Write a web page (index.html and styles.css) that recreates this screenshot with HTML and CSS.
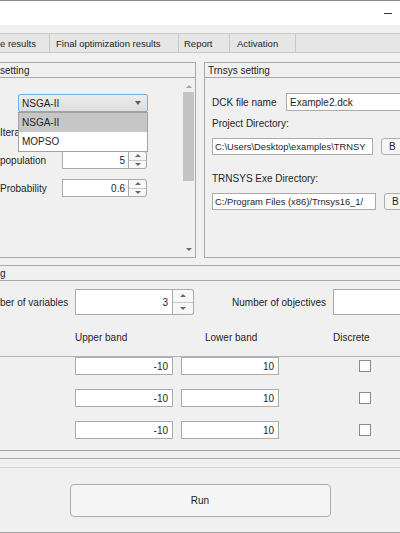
FILE: index.html
```html
<!DOCTYPE html>
<html>
<head>
<meta charset="utf-8">
<link rel="stylesheet" href="styles.css">
</head>
<body>
<div class="titlebar"><span class="min"></span></div>

<div class="tabs">
  <div class="tab tab1"><span>e results</span></div>
  <div class="tab tab2">Final optimization results</div>
  <div class="tab tab3">Report</div>
  <div class="tab tab4">Activation</div>
</div>

<div class="top-row">
  <section class="panel left-panel">
    <div class="panel-head"><span class="cut3">setting</span></div>
    <div class="lp-body">
      <div class="lp-content">
        <div class="dd-wrap">
          <div class="dropdown"><span>NSGA-II</span><span class="dd-arrow"></span></div>
          <ul class="dd-list">
            <li class="dd-item sel">NSGA-II</li>
            <li class="dd-item">MOPSO</li>
          </ul>
        </div>
        <div class="lrow first">
          <span class="llabel">Iteration</span>
          <div class="spinner small"><span class="spin-input">100</span><span class="spin-btns"><span class="up"></span><span class="down"></span></span></div>
        </div>
        <div class="lrow">
          <span class="llabel">population</span>
          <div class="spinner small"><span class="spin-input">5</span><span class="spin-btns"><span class="up"></span><span class="down"></span></span></div>
        </div>
        <div class="lrow">
          <span class="llabel">Probability</span>
          <div class="spinner small"><span class="spin-input">0.6</span><span class="spin-btns"><span class="up"></span><span class="down"></span></span></div>
        </div>
      </div>
      <div class="vscroll">
        <span class="sarrow-up"></span>
        <span class="thumb"></span>
        <span class="sarrow-down"></span>
      </div>
    </div>
  </section>

  <section class="panel right-panel">
    <div class="panel-head">Trnsys setting</div>
    <div class="rp-body">
      <div class="dck-row">
        <span class="dck-label">DCK file name</span>
        <span class="field dck-field">Example2.dck</span>
      </div>
      <div class="rlabel proj">Project Directory:</div>
      <div class="dir-row">
        <span class="field dir-field">C:\Users\Desktop\examples\TRNSY</span>
        <span class="browse">B</span>
      </div>
      <div class="rlabel exe">TRNSYS Exe Directory:</div>
      <div class="dir-row">
        <span class="field dir-field exe-field">C:/Program Files (x86)/Trnsys16_1/</span>
        <span class="browse">B</span>
      </div>
    </div>
  </section>
</div>

<section class="panel lower-panel">
  <div class="panel-head"><span class="cut2">g</span></div>
  <div class="num-row">
    <span class="num-label">ber of variables</span>
    <div class="spinner big"><span class="spin-input">3</span><span class="spin-btns"><span class="up"></span><span class="down"></span></span></div>
    <span class="obj-label">Number of objectives</span>
    <span class="field obj-field"></span>
  </div>
  <div class="head-row">
    <span class="h-up">Upper band</span>
    <span class="h-low">Lower band</span>
    <span class="h-disc">Discrete</span>
  </div>
  <div class="var-area">
    <div class="var-row">
      <span class="field vfield">-10</span>
      <span class="field vfield">10</span>
      <span class="check"></span>
    </div>
    <div class="var-row">
      <span class="field vfield">-10</span>
      <span class="field vfield">10</span>
      <span class="check"></span>
    </div>
    <div class="var-row">
      <span class="field vfield">-10</span>
      <span class="field vfield">10</span>
      <span class="check"></span>
    </div>
  </div>
</section>

<section class="run-panel">
  <button class="run">Run</button>
</section>
</body>
</html>
```

FILE: styles.css
```css
* { box-sizing: border-box; }

body {
  margin: 0;
  width: 400px;
  height: 533px;
  overflow: hidden;
  background: #f0f0f0;
  font-family: "Liberation Sans", Arial, sans-serif;
  font-size: 10px;
  color: #1e1e1e;
}

/* title bar */
.titlebar {
  height: 25px;
  border-top: 1px solid #8c8c8c;
  background: #ffffff;
  display: flex;
  justify-content: flex-end;
  align-items: center;
  padding-right: 8px;
}
.min {
  width: 8px;
  height: 1px;
  background: #333;
}

/* tabs */
.tabs {
  margin-top: 8px;
  height: 20px;
  display: flex;
  background: #e6e6e6;
  border-top: 1px solid #c9c9c9;
  border-bottom: 1px solid #c9c9c9;
  white-space: nowrap;
}
.tab {
  flex: none;
  display: flex;
  align-items: center;
  border-right: 1px solid #c9c9c9;
  padding-left: 6px;
  font-size: 9.5px;
}
.tab1 { width: 50px; padding-left: 0; }
.tab2 { width: 129px; }
.tab3 { width: 51px; padding-left: 5px; }
.tab4 { width: 66px; padding-left: 7px; }

/* panels */
.top-row {
  display: flex;
  margin-top: 9px;
  margin-left: -1px;
  height: 196px;
}
.panel {
  border: 1px solid #a9a9a9;
  display: flex;
  flex-direction: column;
}
.panel-head {
  height: 15px;
  flex: none;
  border-bottom: 1px solid #a9a9a9;
  display: flex;
  align-items: center;
  padding-left: 3px;
  white-space: nowrap;
}
.cut3 { margin-left: -3px; }
.cut2 { margin-left: -3px; }

.left-panel { width: 197px; flex: none; }
.lp-body {
  flex: 1;
  display: flex;
}
.lp-content {
  flex: 1;
  padding-top: 16px;
}
.dd-wrap {
  position: relative;
  margin-left: 18px;
  width: 130px;
}
.dropdown {
  height: 18px;
  border: 1px solid #74aee4;
  border-radius: 2px;
  background: linear-gradient(#ececec, #dddddd);
  display: flex;
  align-items: center;
  justify-content: space-between;
  padding: 0 6px 0 3px;
}
.dd-arrow {
  width: 0;
  height: 0;
  border-left: 3px solid transparent;
  border-right: 3px solid transparent;
  border-top: 4px solid #5a5a5a;
}
.dd-list {
  position: absolute;
  top: 18px;
  left: 0;
  width: 130px;
  margin: 0;
  padding: 0;
  list-style: none;
  border: 1px solid #a3a3a3;
  background: #fff;
  z-index: 2;
}
.dd-item {
  height: 19px;
  display: flex;
  align-items: center;
  padding-left: 3px;
}
.dd-item.sel { background: #c6c6c6; }

.lrow {
  display: flex;
  align-items: center;
  height: 18px;
  margin-top: 10px;
}
.lrow.first { margin-top: 11px; }
.llabel {
  flex: none;
  width: 62px;
  white-space: nowrap;
}

/* spinner */
.spinner {
  flex: none;
  display: flex;
  height: 18px;
}
.spinner.small { width: 85px; }
.spin-input {
  flex: 1;
  border: 1px solid #ababab;
  background: #fff;
  display: flex;
  align-items: center;
  justify-content: flex-end;
  padding-right: 3px;
}
.spin-btns {
  width: 18px;
  border: 1px solid #ababab;
  border-left: none;
  border-radius: 0 3px 3px 0;
  background: #f7f7f7;
  display: flex;
  flex-direction: column;
}
.spin-btns .up, .spin-btns .down {
  flex: 1;
  display: flex;
  align-items: center;
  justify-content: center;
}
.spin-btns .up { border-bottom: 1px solid #c8c8c8; }
.spin-btns .up::before {
  content: "";
  border-left: 3px solid transparent;
  border-right: 3px solid transparent;
  border-bottom: 3px solid #6a6a6a;
}
.spin-btns .down::before {
  content: "";
  border-left: 3px solid transparent;
  border-right: 3px solid transparent;
  border-top: 3px solid #6a6a6a;
}
.spinner.big { width: 119px; height: 26px; }
.spinner.big .spin-btns { width: 21px; }
.spinner.big .spin-input { padding-right: 4px; }

/* scrollbar */
.vscroll {
  flex: none;
  width: 11px;
  margin-right: 1px;
  display: flex;
  flex-direction: column;
  align-items: center;
}
.sarrow-up {
  margin-top: 7px;
  border-left: 3px solid transparent;
  border-right: 3px solid transparent;
  border-bottom: 3px solid #a6a6a6;
}
.thumb {
  width: 11px;
  height: 89px;
  margin-top: 4px;
  background: #c3c3c3;
}
.sarrow-down {
  margin-top: auto;
  margin-bottom: 6px;
  border-left: 3px solid transparent;
  border-right: 3px solid transparent;
  border-top: 3px solid #6a6a6a;
}

/* right panel */
.right-panel { width: 240px; flex: none; margin-left: 8px; }
.rp-body { padding-left: 7px; white-space: nowrap; }
.field {
  flex: none;
  border: 1px solid #ababab;
  background: #fff;
  display: flex;
  align-items: center;
  white-space: nowrap;
  overflow: hidden;
}
.dck-row {
  display: flex;
  align-items: center;
  margin-top: 15px;
  height: 18px;
}
.dck-label { flex: none; width: 74px; }
.dck-field { height: 18px; width: 140px; padding-left: 3px; }
.rlabel { height: 14px; display: flex; align-items: center; }
.rlabel.proj { margin-top: 5px; }
.rlabel.exe { margin-top: 16px; }
.dir-row {
  display: flex;
  height: 17px;
  margin-top: 8px;
}
.dir-field { width: 161px; padding-left: 2px; font-size: 9.4px; }
.exe-field { width: 164px; }
.browse {
  flex: none;
  margin-left: 8px;
  width: 40px;
  border: 1px solid #adadad;
  border-radius: 3px;
  background: #f5f5f5;
  display: flex;
  align-items: center;
  padding-left: 7px;
}
.exe-field + .browse { margin-left: 8px; }

/* lower panel */
.lower-panel {
  margin-top: 7px;
  margin-left: -1px;
  width: 420px;
  border-right: none;
  padding-bottom: 7px;
}
.num-row {
  display: flex;
  align-items: center;
  margin-top: 8px;
  height: 26px;
  white-space: nowrap;
}
.num-label {
  flex: none;
  width: 66px;
  text-align: right;
  margin-right: 9px;
}
.obj-label {
  flex: none;
  width: 132px;
  text-align: right;
  margin-right: 7px;
}
.obj-field { width: 100px; height: 26px; }
.head-row {
  display: flex;
  margin-top: 15px;
  height: 14px;
  align-items: center;
  padding-left: 75px;
  white-space: nowrap;
}
.h-up { flex: none; width: 130px; }
.h-low { flex: none; width: 128px; }
.var-area {
  margin-top: 12px;
  border-top: 1px solid #b4b4b4;
  border-bottom: 1px solid #a0a0a0;
  height: 95px;
  display: flex;
  flex-direction: column;
  gap: 14px;
}
.var-row {
  display: flex;
  align-items: center;
  height: 18px;
  padding-left: 75px;
}
.vfield {
  width: 98px;
  height: 18px;
  justify-content: flex-end;
  padding-right: 4px;
}
.vfield + .vfield { margin-left: 8px; }
.check {
  flex: none;
  width: 12px;
  height: 12px;
  margin-left: 80px;
  border: 1px solid #8a8a8a;
  background: #fdfdfd;
}

/* run */
.run-panel {
  margin-top: 8px;
  border-top: 1px solid #d6d6d6;
  border-bottom: 1px solid #a6a6a6;
  height: 66px;
  padding-top: 16px;
  display: flex;
  justify-content: center;
  align-items: flex-start;
}
.run {
  width: 261px;
  height: 33px;
  border: 1px solid #adadad;
  border-radius: 4px;
  background: #f5f5f5;
  font-family: "Liberation Sans", Arial, sans-serif;
  font-size: 10px;
  color: #1e1e1e;
  padding: 0;
}
```
